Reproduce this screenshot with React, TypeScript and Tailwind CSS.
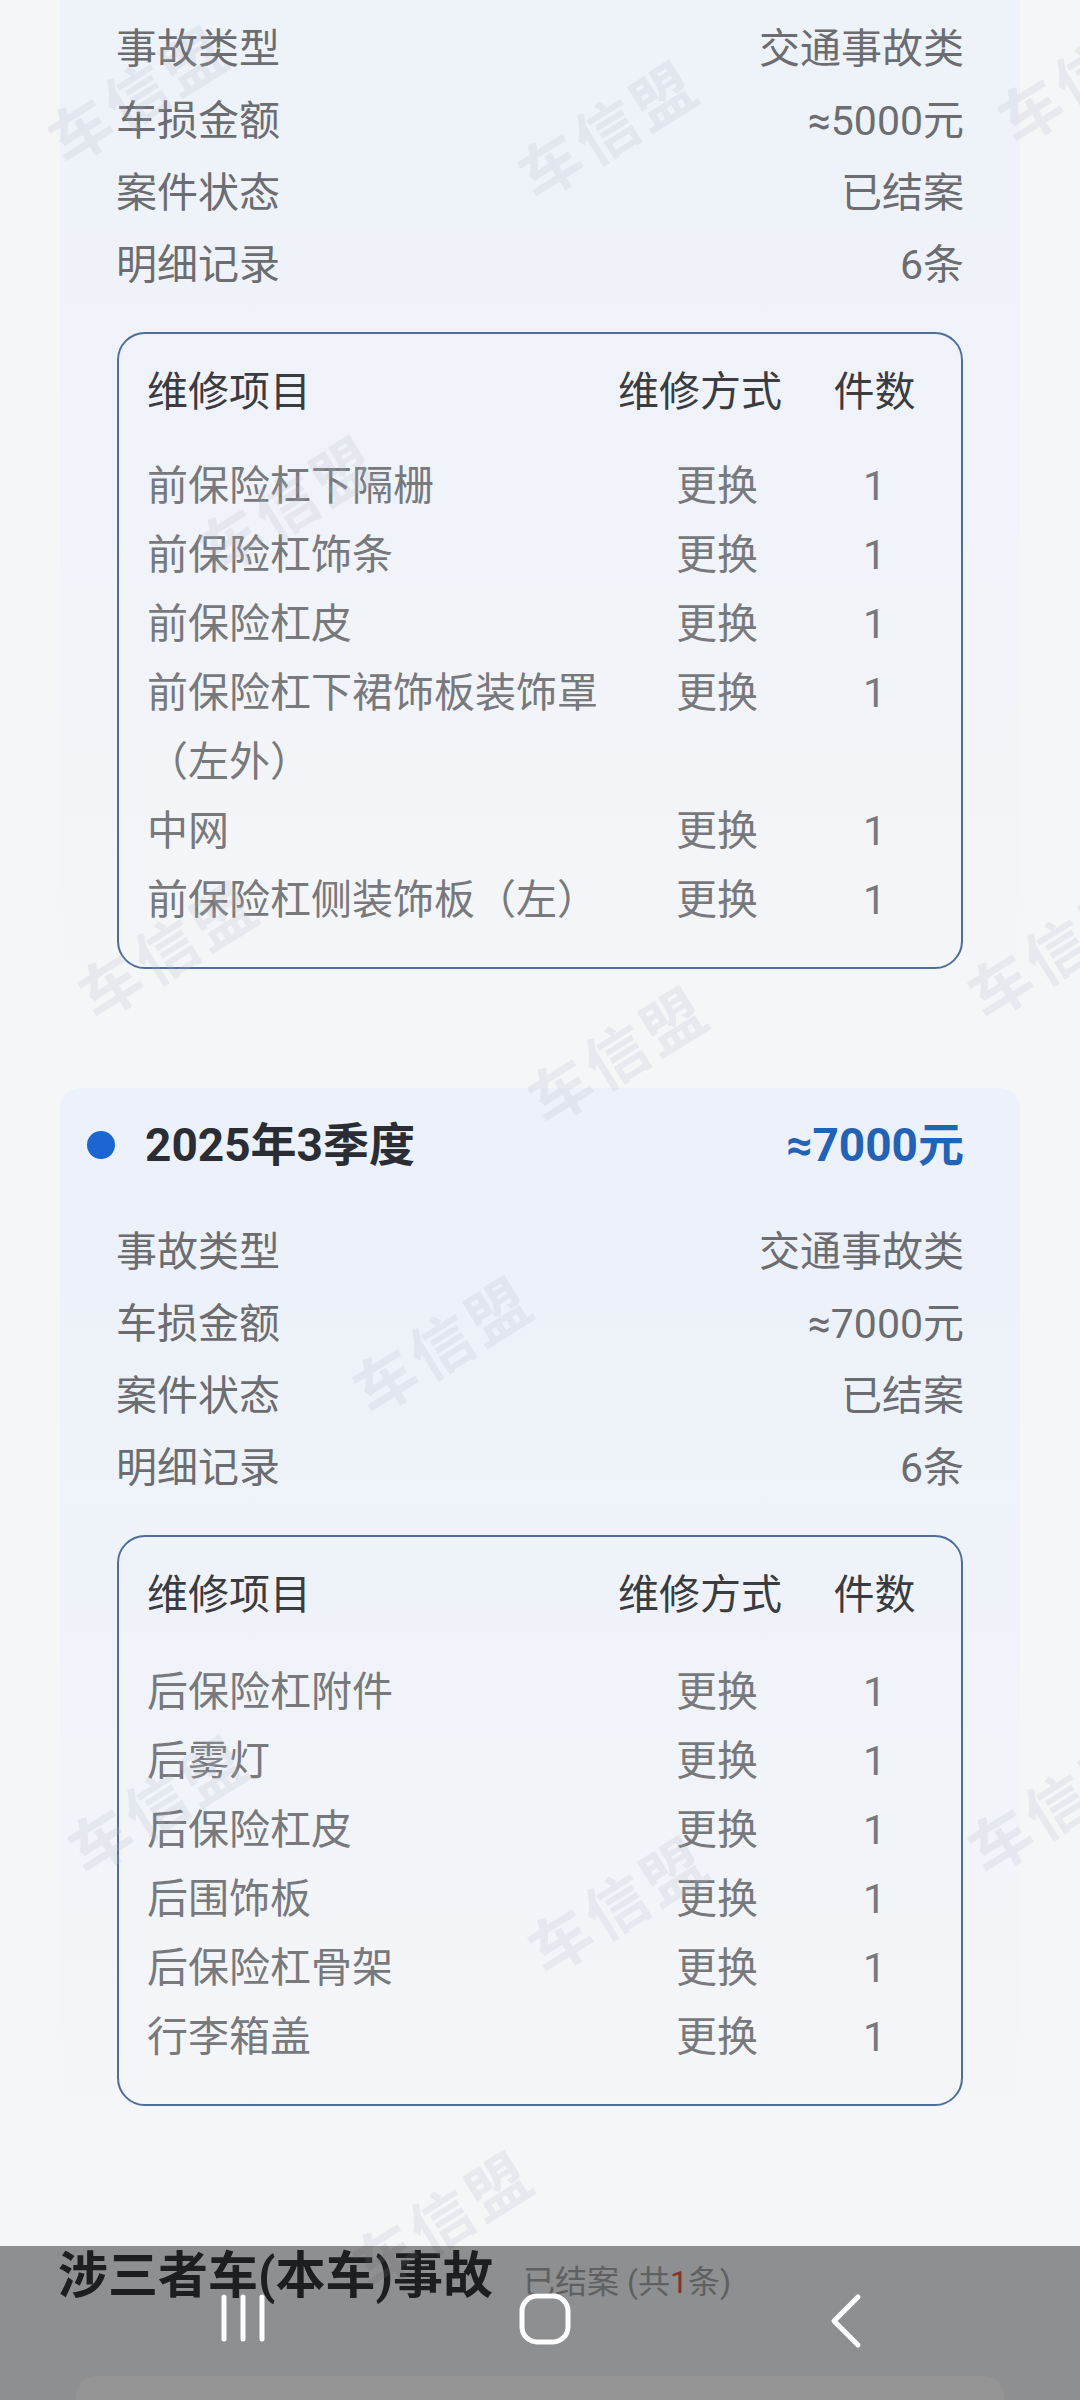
import React from 'react';

type Repair = { name: string; method: string; count: number };

const card1Info = [
  { label: '事故类型', value: '交通事故类' },
  { label: '车损金额', value: '≈5000元' },
  { label: '案件状态', value: '已结案' },
  { label: '明细记录', value: '6条' },
];

const card1Repairs: Repair[] = [
  { name: '前保险杠下隔栅', method: '更换', count: 1 },
  { name: '前保险杠饰条', method: '更换', count: 1 },
  { name: '前保险杠皮', method: '更换', count: 1 },
  { name: '前保险杠下裙饰板装饰罩（左外）', method: '更换', count: 1 },
  { name: '中网', method: '更换', count: 1 },
  { name: '前保险杠侧装饰板（左）', method: '更换', count: 1 },
];

const card2Info = [
  { label: '事故类型', value: '交通事故类' },
  { label: '车损金额', value: '≈7000元' },
  { label: '案件状态', value: '已结案' },
  { label: '明细记录', value: '6条' },
];

const card2Repairs: Repair[] = [
  { name: '后保险杠附件', method: '更换', count: 1 },
  { name: '后雾灯', method: '更换', count: 1 },
  { name: '后保险杠皮', method: '更换', count: 1 },
  { name: '后围饰板', method: '更换', count: 1 },
  { name: '后保险杠骨架', method: '更换', count: 1 },
  { name: '行李箱盖', method: '更换', count: 1 },
];

// faint "车信盟" watermark stamps across the page
const watermarks = [
  { left: 40, top: 50 },
  { left: 510, top: 85 },
  { left: 990, top: 30 },
  { left: 190, top: 460 },
  { left: 70, top: 905 },
  { left: 520, top: 1010 },
  { left: 960, top: 905 },
  { left: 345, top: 1300 },
  { left: 60, top: 1760 },
  { left: 520, top: 1860 },
  { left: 960, top: 1760 },
  { left: 345, top: 2175 },
];

const InfoRow: React.FC<{ label: string; value: string }> = ({ label, value }) => (
  <div className="flex items-center justify-between leading-[72px] text-[41px] text-[#6b6d71]">
    <span>{label}</span>
    <span>{value}</span>
  </div>
);

const RepairTable: React.FC<{ items: Repair[]; gap: string }> = ({ items, gap }) => (
  <div className="mx-[57px] rounded-[28px] border-2 border-[#4f6f9b] pl-[28px] pr-[34px] pt-[24px] pb-[32px] text-[41px] leading-[69px]">
    <div className="flex text-[#3a3c40]">
      <div className="flex-1">维修项目</div>
      <div className="w-[204px] text-left">维修方式</div>
      <div className="w-[105px] text-center">件数</div>
    </div>
    <div className={gap + ' text-[#77797d]'}>
      {items.map((item) => (
        <div key={item.name} className="flex">
          <div className="flex-1">{item.name}</div>
          <div className="w-[204px] pr-[6px] text-center">{item.method}</div>
          <div className="w-[105px] text-center">{item.count}</div>
        </div>
      ))}
    </div>
  </div>
);

const App: React.FC = () => {
  return (
    <div className="relative h-[2400px] w-[1080px] overflow-hidden bg-[#f5f6f8] font-[Roboto,'Noto_Sans_CJK_SC',sans-serif]">
      {/* Card 1 (scrolled, header off screen) */}
      <div className="mx-[60px] rounded-b-[20px] bg-linear-to-b from-[#eef2f9] via-[#f0f3f9] to-[#f5f6f8] pt-[13px] pb-[42px]">
        <div className="px-[56px]">
          {card1Info.map((r) => (
            <InfoRow key={r.label} {...r} />
          ))}
        </div>
        <div className="mt-[31px]">
          <RepairTable items={card1Repairs} gap="mt-[25px]" />
        </div>
      </div>

      {/* Card 2 */}
      <div className="mx-[60px] mt-[77px] rounded-[20px] bg-linear-to-b from-[#ecf1fa] via-[#eff3f9] to-[#f5f6f8] pt-[27px] pb-[42px]">
        <div className="flex items-center justify-between pl-[27px] pr-[56px] leading-[60px]">
          <div className="flex items-center">
            <span className="h-[28px] w-[28px] rounded-full bg-[#1b66d2]" />
            <span className="ml-[30px] text-[46px] font-bold text-[#2a2d33]">2025年3季度</span>
          </div>
          <span className="text-[46px] font-bold text-[#2462b5]">≈7000元</span>
        </div>
        <div className="mt-[41px] px-[56px]">
          {card2Info.map((r) => (
            <InfoRow key={r.label} {...r} />
          ))}
        </div>
        <div className="mt-[31px]">
          <RepairTable items={card2Repairs} gap="mt-[28px]" />
        </div>
      </div>

      {/* Next section header */}
      <div className="mt-[98px] flex items-baseline px-[58px] leading-[60px]">
        <span className="text-[50px] font-bold text-[#333438]">涉三者车(本车)事故</span>
        <span className="ml-[30px] text-[32px] text-[#a3a5a9]">
          已结案 (共<span className="text-[#e0584a]">1</span>条)
        </span>
      </div>
      <div className="mx-[76px] mt-[64px] h-[60px] rounded-t-[20px] bg-white" />

      {/* Watermarks */}
      {watermarks.map((w, i) => (
        <span
          key={i}
          className="pointer-events-none absolute -rotate-[32deg] select-none whitespace-nowrap text-[62px] font-bold tracking-[4px] text-[#b3bac6]/20"
          style={{ left: w.left, top: w.top }}
        >
          车信盟
        </span>
      ))}

      {/* System navigation bar overlay */}
      <div className="absolute bottom-0 left-0 right-0 flex h-[154px] items-start justify-between bg-black/[0.42] pl-[219px] pr-[217px] pt-[47px]">
        <svg width="48" height="50" viewBox="0 0 48 50">
          <g stroke="white" strokeWidth="5" strokeLinecap="round">
            <line x1="5" y1="4" x2="5" y2="46" />
            <line x1="24" y1="4" x2="24" y2="46" />
            <line x1="43" y1="4" x2="43" y2="46" />
          </g>
        </svg>
        <svg width="52" height="52" viewBox="0 0 52 52" className="-ml-[6px]">
          <rect x="3" y="3" width="46" height="46" rx="15" fill="none" stroke="white" strokeWidth="5" />
        </svg>
        <svg width="34" height="56" viewBox="0 0 34 56">
          <polyline points="29,4 5,28 29,52" fill="none" stroke="white" strokeWidth="5" strokeLinecap="round" strokeLinejoin="round" />
        </svg>
      </div>
    </div>
  );
};

export default App;
